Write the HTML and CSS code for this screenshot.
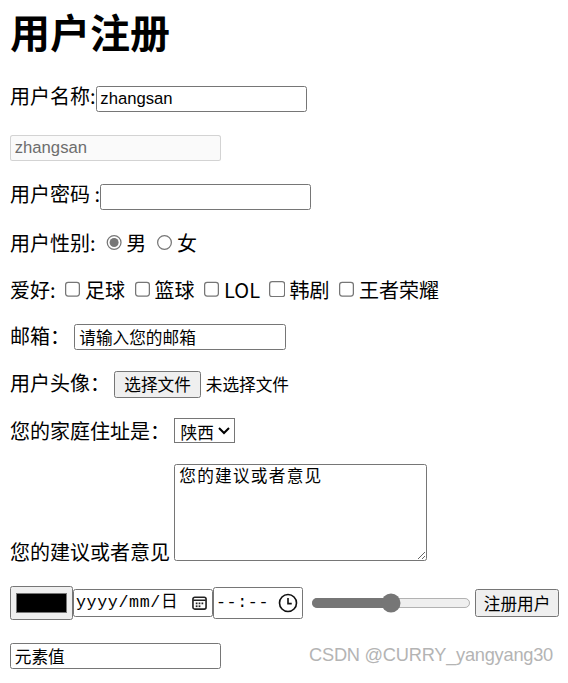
FILE: index.html
```html
<!DOCTYPE html>
<html lang="zh-CN">
<head>
    <meta charset="UTF-8">
    <meta name="viewport" content="width=device-width, initial-scale=1.0">
    <title>用户注册</title>
    <link rel="stylesheet" href="styles.css">
</head>
<body>
    <h1>用户注册</h1>
    <form action="#">
        <p>用户名称:<input type="text" class="field" value="zhangsan"></p>
        <p><input type="text" class="field" value="zhangsan" disabled></p>
        <p>用户密码 :<input type="password" class="field"></p>
        <p>用户性别: <input type="radio" name="sex" checked>男 <input type="radio" name="sex">女</p>
        <p>爱好: <input type="checkbox">足球 <input type="checkbox">篮球 <input type="checkbox">LOL <input type="checkbox">韩剧 <input type="checkbox">王者荣耀</p>
        <p>邮箱： <input type="email" class="field" value="请输入您的邮箱"></p>
        <p>用户头像： <button type="button" class="file-btn">选择文件</button><span class="file-name">未选择文件</span></p>
        <p>您的家庭住址是： <select class="city">
            <option>陕西</option>
            <option>北京</option>
            <option>上海</option>
        </select></p>
        <p>您的建议或者意见 <textarea class="advice">您的建议或者意见</textarea></p>
        <p class="tools">
            <input type="color" class="color"><span class="fake-field date-field"><span class="fake-text">yyyy/mm/日</span><svg class="cal" width="12" height="12" viewBox="0 0 12 12"><rect x="0.75" y="1.75" width="10.5" height="9.5" rx="1.5" fill="none" stroke="#222" stroke-width="1.3"/><line x1="1" y1="4.2" x2="11" y2="4.2" stroke="#222" stroke-width="1.2"/><rect x="3" y="6" width="1.4" height="1.4" fill="#222"/><rect x="5.3" y="6" width="1.4" height="1.4" fill="#222"/><rect x="7.6" y="6" width="1.4" height="1.4" fill="#222"/><rect x="3" y="8.3" width="1.4" height="1.4" fill="#222"/><rect x="5.3" y="8.3" width="1.4" height="1.4" fill="#222"/></svg></span><span class="fake-field time-field"><span class="fake-text">--:--</span><svg class="clock" width="16" height="16" viewBox="0 0 16 16"><circle cx="8" cy="8" r="6.8" fill="none" stroke="#111" stroke-width="1.3"/><path d="M8 4v4.5h3" fill="none" stroke="#111" stroke-width="1.3"/></svg></span>
            <input type="range" class="range">
            <input type="submit" class="submit" value="注册用户">
        </p>
        <p class="last"><input type="text" class="field" value="元素值"></p>
    </form>
    <div class="watermark">CSDN @CURRY_yangyang30</div>
</body>
</html>
```

FILE: styles.css
```css
html {
    zoom: 1.25;
}

body {
    font-family: "Noto Sans CJK SC", "Microsoft YaHei", sans-serif;
    font-size: 16px;
    line-height: 1.32;
    color: #000;
    background-color: #fff;
    margin: 0 6px 0 8px;
    position: relative;
}

h1 {
    font-size: 32px;
    margin: 4px 0 20px;
}

p {
    margin: 16px 0;
}

input,
select,
button,
textarea {
    font-family: "Liberation Sans", "Noto Sans CJK SC", sans-serif;
    font-size: 13.33px;
}

input[type="radio"],
input[type="checkbox"],
input[type="range"] {
    accent-color: #767676;
}

.field {
    width: 169px;
    height: 21px;
    box-sizing: border-box;
    border: 1px solid #767676;
    border-radius: 2px;
    padding: 1px 3px;
}

.field:disabled {
    border-color: rgba(118, 118, 118, 0.3);
    background-color: rgba(239, 239, 239, 0.3);
    color: #6d6d6d;
}

.file-btn,
.submit {
    font-family: "Noto Sans CJK SC", sans-serif;
    background-color: #efefef;
    border: 1px solid #767676;
    border-radius: 2px;
    padding: 1px 6px;
    height: 22px;
    line-height: 18px;
}

.file-btn {
    width: 69px;
    margin-right: 4px;
}

.file-name {
    font-size: 13.33px;
}

.city {
    font-family: "Noto Sans CJK SC", sans-serif;
    font-size: 13.33px;
    height: 20px;
    padding: 0;
    border: 1px solid #767676;
    border-radius: 0;
    background-color: #fff;
}

.advice {
    font-family: "Liberation Mono", "Noto Sans CJK SC", monospace;
    width: 202px;
    height: 77px;
    box-sizing: border-box;
    border: 1px solid #767676;
    border-radius: 2px;
    padding: 2px 3px;
    line-height: 1.2;
    letter-spacing: 1px;
    resize: both;
}

.tools {
    white-space: nowrap;
}

.color {
    width: 50px;
    height: 27px;
    margin: 0;
    vertical-align: middle;
}

.fake-field {
    display: inline-flex;
    align-items: center;
    justify-content: space-between;
    box-sizing: border-box;
    border: 1px solid #767676;
    border-radius: 2px;
    background-color: #fff;
    padding: 0 4px 0 2px;
    font-family: "Liberation Mono", "Noto Sans CJK SC", monospace;
    font-size: 13.33px;
    vertical-align: middle;
}

.date-field {
    width: 112px;
    height: 23px;
}

.time-field {
    width: 72px;
    height: 25px;
    padding-right: 3px;
}

.fake-text {
    letter-spacing: 0.5px;
}

.range {
    width: 128px;
    margin: 2px 0 2px 3px;
    vertical-align: middle;
}

.submit {
    vertical-align: middle;
    margin: 0;
    width: 67px;
    height: 23px;
    padding: 1px 4px;
    box-sizing: border-box;
}

.last {
    margin: 18px 0 0;
}

.watermark {
    position: absolute;
    right: 6px;
    top: 515px;
    font-family: "Liberation Sans", sans-serif;
    font-size: 14.6px;
    line-height: 1.2;
    color: #b4b4b4;
    letter-spacing: -0.2px;
}
```
